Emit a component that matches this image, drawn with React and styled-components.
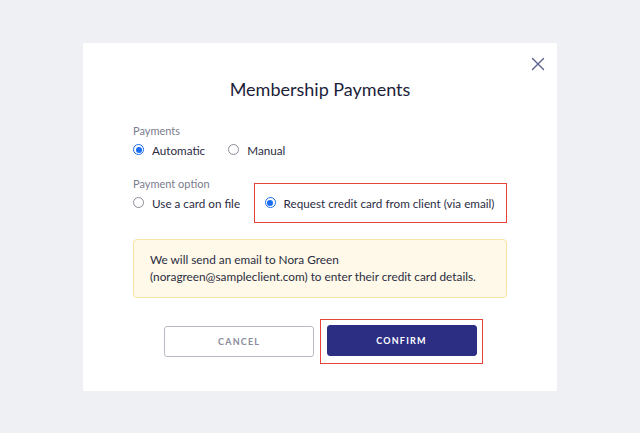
import React, { useState } from "react";
import styled, { createGlobalStyle } from "styled-components";

const Global = createGlobalStyle`
  html, body { margin: 0; padding: 0; }
  body { background: #eff0f4; font-family: Lato, "Open Sans", sans-serif; }
  * { box-sizing: border-box; }
`;

const Page = styled.div`
  height: 433px;
  display: flex;
  align-items: center;
  justify-content: center;
`;

const Modal = styled.div`
  position: relative;
  width: 474px;
  height: 348px;
  background: #fff;
  padding: 34px 50px 33px;
  display: flex;
  flex-direction: column;
`;

const Close = styled.button`
  position: absolute;
  top: 14px;
  right: 12px;
  width: 14px;
  height: 14px;
  padding: 0;
  border: none;
  background: none;
  cursor: pointer;
  display: flex;
`;

const Title = styled.h1`
  margin: 0;
  font-size: 18px;
  line-height: 24px;
  font-weight: 400;
  color: #1d1e3a;
  text-align: center;
`;

const Label = styled.div`
  font-size: 11px;
  line-height: 14px;
  color: #7b7c8c;
  margin-top: ${(p) => p.$mt}px;
`;

const Row = styled.div`
  display: flex;
  align-items: center;
  height: 16px;
  margin-top: 4px;
`;

const Option = styled.label`
  display: flex;
  align-items: center;
  gap: 8px;
  font-size: 11.7px;
  color: #2b2c3f;
  white-space: nowrap;
  flex-shrink: 0;
  margin-right: ${(p) => p.$mr || 0}px;
  cursor: pointer;
`;

const Highlight = styled.div`
  display: flex;
  align-items: center;
  flex-shrink: 0;
  height: 40px;
  margin: -12px 0;
  padding: 0 12px 0 9.5px;
  border: 1.6px solid #e8433a;
`;

const Radio = styled.span`
  width: 11px;
  height: 11px;
  border-radius: 50%;
  border: 1px solid ${(p) => (p.$on ? "#1a6cf2" : "#8a8b96")};
  display: flex;
  align-items: center;
  justify-content: center;
  flex-shrink: 0;
  &::after {
    content: "";
    width: 6px;
    height: 6px;
    border-radius: 50%;
    background: #1a6cf2;
    display: ${(p) => (p.$on ? "block" : "none")};
  }
`;

const Notice = styled.div`
  margin-top: 28px;
  background: #fef9e8;
  border: 1px solid #f6e5a6;
  border-radius: 4px;
  padding: 11px 16px 12px;
  font-size: 11.8px;
  line-height: 17px;
  color: #2b2c3f;
`;

const Actions = styled.div`
  margin-top: 28px;
  display: flex;
  justify-content: center;
  gap: 13px;
`;

const Button = styled.button`
  width: 150px;
  height: 31px;
  border-radius: 3px;
  font-family: Lato, sans-serif;
  font-size: 9px;
  font-weight: 700;
  letter-spacing: 1.2px;
  cursor: pointer;
  border: 1px solid ${(p) => (p.$primary ? "#2c2e83" : "#b9bac6")};
  background: ${(p) => (p.$primary ? "#2c2e83" : "#fff")};
  color: ${(p) => (p.$primary ? "#fff" : "#8a8b9c")};
`;

const ButtonFrame = styled.div`
  margin: -7px;
  padding: 5.4px;
  border: 1.6px solid #e8433a;
  display: flex;
`;

function RadioOption({ on, children, mr, onClick }) {
  return (
    <Option $mr={mr} onClick={onClick}>
      <Radio $on={on} />
      {children}
    </Option>
  );
}

export default function App() {
  const [mode, setMode] = useState("auto");
  const [opt, setOpt] = useState("request");
  return (
    <>
      <Global />
      <Page>
        <Modal>
          <Close aria-label="Close">
            <svg width="14" height="14" viewBox="0 0 14 14">
              <path d="M1.5 1.5 L12.5 12.5 M12.5 1.5 L1.5 12.5" stroke="#5c6090" strokeWidth="1.4" strokeLinecap="round" />
            </svg>
          </Close>
          <Title>Membership Payments</Title>
          <Label $mt={23}>Payments</Label>
          <Row>
            <RadioOption on={mode === "auto"} mr={23} onClick={() => setMode("auto")}>
              Automatic
            </RadioOption>
            <RadioOption on={mode === "manual"} onClick={() => setMode("manual")}>
              Manual
            </RadioOption>
          </Row>
          <Label $mt={19}>Payment option</Label>
          <Row>
            <RadioOption on={opt === "file"} mr={14} onClick={() => setOpt("file")}>
              Use a card on file
            </RadioOption>
            <Highlight>
              <RadioOption on={opt === "request"} onClick={() => setOpt("request")}>
                Request credit card from client (via email)
              </RadioOption>
            </Highlight>
          </Row>
          <Notice>
            We will send an email to Nora Green
            <br />
            (noragreen@sampleclient.com) to enter their credit card details.
          </Notice>
          <Actions>
            <Button>CANCEL</Button>
            <ButtonFrame>
              <Button $primary>CONFIRM</Button>
            </ButtonFrame>
          </Actions>
        </Modal>
      </Page>
    </>
  );
}
